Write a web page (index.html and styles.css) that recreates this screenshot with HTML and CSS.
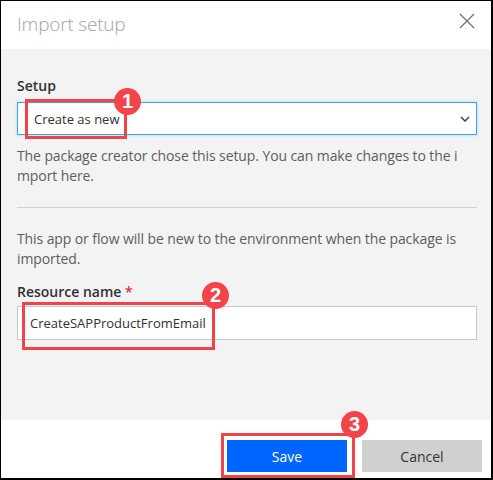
FILE: index.html
```html
<!DOCTYPE html>
<html>
<head>
<meta charset="utf-8">
<link rel="stylesheet" href="styles.css">
</head>
<body>
<div class="dialog">
  <div class="header">
    <span class="title">Import setup</span>
    <svg class="close" width="16" height="16" viewBox="0 0 16 16"><path d="M1 1L15 15M15 1L1 15" stroke="#6b6b6b" stroke-width="1.2" fill="none"/></svg>
  </div>
  <div class="body">
    <div class="label">Setup</div>
    <div class="field">
      <div class="select">
        <span>Create as new</span>
        <svg class="chev" width="10" height="6" viewBox="0 0 10 6"><path d="M1 1L5 5L9 1" stroke="#444" stroke-width="1.5" fill="none"/></svg>
      </div>
      <div class="mark mark1"></div>
      <div class="badge badge1">1</div>
    </div>
    <p class="desc first">The package creator chose this setup. You can make changes to the i<br>mport here.</p>
    <div class="divider"></div>
    <p class="desc second">This app or flow will be new to the environment when the package is<br>imported.</p>
    <div class="label name">Resource name <span class="req">*</span></div>
    <div class="field">
      <div class="input">CreateSAPProductFromEmail</div>
      <div class="mark mark2"></div>
      <div class="badge badge2">2</div>
    </div>
  </div>
  <div class="footer">
    <div class="field">
      <button class="btn save">Save</button>
      <div class="mark mark3"></div>
      <div class="badge badge3">3</div>
    </div>
    <button class="btn cancel">Cancel</button>
  </div>
</div>
</body>
</html>
```
FILE: styles.css
```css
* { box-sizing: border-box; }
html, body { margin: 0; padding: 0; background: #fff; }
body { font-family: "Open Sans", "Noto Sans", sans-serif; }
.dialog {
  width: 493px;
  height: 480px;
  border-top: 1px solid #000;
  border-left: 1px solid #000;
  border-right: 2px solid #000;
  border-bottom: 2px solid #000;
  display: flex;
  flex-direction: column;
}
.header {
  height: 48px;
  display: flex;
  align-items: flex-start;
  justify-content: space-between;
  padding: 0 16px 0 16px;
}
.title {
  font-weight: 300;
  font-size: 19px;
  letter-spacing: -0.2px;
  color: #a3a3a3;
  margin-top: 9px;
  line-height: 28px;
}
.close { margin-top: 12px; margin-right: 0; }
.body {
  background: #f3f3f3;
  height: 371px;
  padding: 27px 14px 0 16px;
}
.label {
  font-size: 14px;
  font-weight: 600;
  color: #323130;
  line-height: 20px;
  margin-bottom: 6px;
}
.label.name { margin-top: 13px; margin-bottom: 4px; }
.req { color: #e0303a; }
.field { position: relative; }
.select {
  height: 33px;
  background: #fff;
  border: 1px solid #36a6f2;
  box-shadow: 0 0 3px rgba(54,166,242,0.35);
  display: flex;
  align-items: center;
  justify-content: space-between;
  padding: 0 6px 0 16px;
  font-size: 13px;
  color: #323130;
}
.chev { margin-top: 1px; }
.input {
  height: 34px;
  background: #fff;
  border: 1px solid #c8c8c8;
  display: flex;
  align-items: center;
  padding-left: 12px;
  font-size: 13px;
  color: #323130;
}
.desc {
  margin: 0;
  font-size: 14px;
  line-height: 20px;
  color: #605e5c;
  white-space: nowrap;
  letter-spacing: -0.1px;
}
.desc.first { margin-top: 11px; }
.divider {
  height: 1px;
  background: #d2d2d2;
  margin: 21px 0 21px 0;
}
.mark {
  position: absolute;
  border: 3px solid #f0434a;
}
.mark1 { left: 8px; top: -3px; width: 102px; height: 40px; }
.mark2 { left: 5px; top: -4px; width: 193px; height: 48px; }
.mark3 { left: -6px; top: -7px; width: 134px; height: 45px; }
.badge {
  position: absolute;
  width: 27px;
  height: 27px;
  border-radius: 50%;
  background: #f24449;
  color: #fff;
  font-family: "Liberation Sans", Arial, sans-serif;
  font-weight: 700;
  font-size: 20px;
  line-height: 27px;
  text-align: center;
}
.badge1 { left: 97px; top: -14px; }
.badge2 { left: 185px; top: -24px; }
.badge3 { left: 114px; top: -29px; }
.footer {
  flex: 1;
  display: flex;
  justify-content: flex-end;
  align-items: flex-start;
  padding: 20px 9px 0 0;
  gap: 15px;
}
.btn {
  width: 120px;
  height: 32px;
  border: none;
  font-family: "Open Sans", "Noto Sans", sans-serif;
  font-size: 14px;
  margin: 0;
  padding: 0;
  display: block;
}
.save { background: #0066ff; color: #fff; }
.cancel { background: #d0d0d0; color: #333; }
```
